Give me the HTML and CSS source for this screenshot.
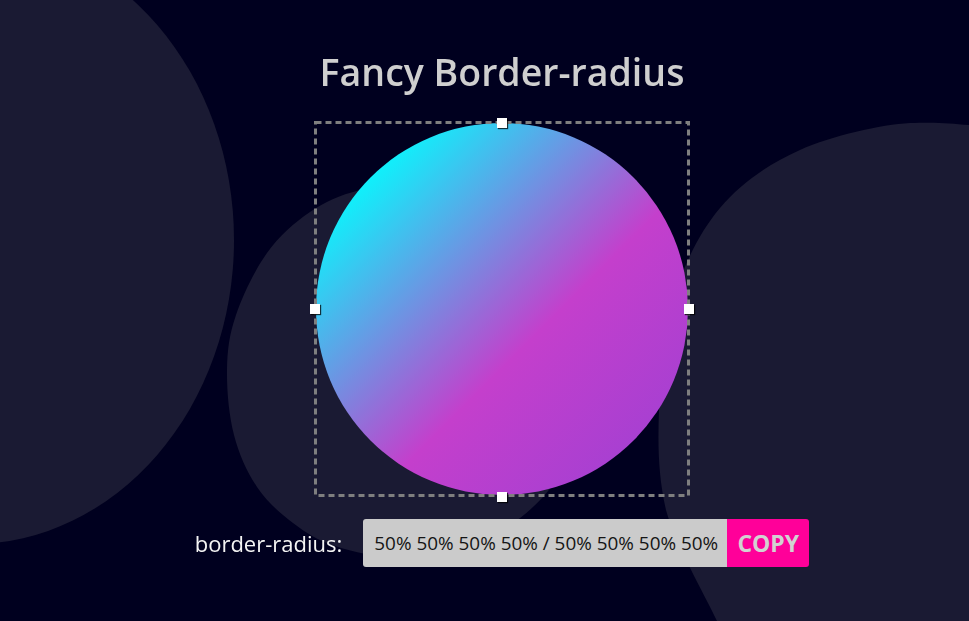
FILE: index.html
```html
<!DOCTYPE html>
<html lang="en">
<head>
<meta charset="utf-8">
<title>Fancy Border-radius</title>
<link rel="stylesheet" href="styles.css">
</head>
<body>
<svg class="bg" width="969" height="621" viewBox="0 0 969 621" aria-hidden="true">
  <ellipse class="blob" cx="-28" cy="240" rx="262" ry="304"/>
  <path class="blob" d="M440,178 C406.7,171.3 381.7,184.3 360,190 C338.3,195.7 325.5,201.5 310,212 C294.5,222.5 279.3,235.8 267,253 C254.7,270.2 242.7,295.5 236,315 C229.3,334.5 227.3,350 227,370 C226.7,390 229,415.5 234,435 C239,454.5 247.2,472.3 257,487 C266.8,501.7 280,513.2 293,523 C306,532.8 317.2,540.2 335,546 C352.8,551.8 377.5,557.7 400,558 C422.5,558.3 446.2,558.2 470,548 C493.8,537.8 523.8,518.3 543,497 C562.2,475.7 576.3,447.8 585,420 C593.7,392.2 599.2,361.7 595,330 C590.8,298.3 585.8,255.3 560,230 C534.2,204.7 473.3,184.7 440,178 Z"/>
  <path class="blob" d="M1000,125 L969,125 C949,123.5 940,122 910,123 C881.8,124.5 831.7,135.8 800,150 C768.3,164.2 741.2,183 720,208 C698.8,233 683.2,266.3 673,300 C662.8,333.7 660.2,375 659,410 C657.8,445 658,474.8 666,510 C675.7,545.2 703.8,592.7 717,621 L730,640 L1000,640 Z"/>
</svg>
<main class="app">
  <h1 class="title">Fancy Border-radius</h1>
  <div class="stage">
    <div class="shape"></div>
    <svg class="frame" width="376" height="376" viewBox="0 0 376 376" aria-hidden="true">
      <rect x="1.5" y="1.5" width="373" height="373" fill="none" stroke="#7f7f7f" stroke-width="3" stroke-dasharray="6 4"/>
    </svg>
    <span class="handle handle-top"></span>
    <span class="handle handle-left"></span>
    <span class="handle handle-right"></span>
    <span class="handle handle-bottom"></span>
  </div>
  <div class="controls">
    <span class="label">border-radius:</span>
    <div class="field">
      <span class="value">50% 50% 50% 50% / 50% 50% 50% 50%</span>
      <button class="copy" type="button">COPY</button>
    </div>
  </div>
</main>
</body>
</html>
```
FILE: styles.css
```css
html, body {
  margin: 0;
  padding: 0;
  height: 100%;
}

body {
  background: #00001f;
  overflow: hidden;
  font-family: "Open Sans", "Noto Sans", sans-serif;
}

.bg {
  position: fixed;
  left: 0;
  top: 0;
  z-index: 0;
  display: block;
}

.blob {
  fill: #1a1a33;
}

.app {
  position: relative;
  z-index: 1;
  display: flex;
  flex-direction: column;
  align-items: center;
  padding: 50px 0 0 35px;
}

.title {
  margin: 0 0 27px;
  font-size: 37.5px;
  line-height: 44px;
  font-weight: 600;
  color: #cfcfcf;
}

.stage {
  position: relative;
  box-sizing: border-box;
  width: 376px;
  height: 376px;
  padding: 2px;
  margin-bottom: 22px;
}

.frame {
  position: absolute;
  left: 0;
  top: 0;
  display: block;
}

.shape {
  width: 100%;
  height: 100%;
  border-radius: 50%;
  background: linear-gradient(135deg, #00ffff 11%, #c43fcc 58%, #9a40d4 100%);
}

.handle {
  position: absolute;
  width: 10px;
  height: 10px;
  background: #ffffff;
  box-shadow: 1px 1px 1px rgba(0, 0, 0, 0.75);
}

.handle-top {
  top: -3px;
  left: 50%;
  margin-left: -5px;
}

.handle-bottom {
  bottom: -5px;
  left: 50%;
  margin-left: -5px;
}

.handle-left {
  left: -4px;
  top: 50%;
  margin-top: -5px;
}

.handle-right {
  right: -4px;
  top: 50%;
  margin-top: -5px;
}

.controls {
  display: flex;
  align-items: center;
  gap: 21px;
  height: 48px;
}

.label {
  font-size: 22px;
  color: #f4f4f4;
  white-space: nowrap;
}

.field {
  display: flex;
  height: 48px;
  border-radius: 3px;
  overflow: hidden;
}

.value {
  box-sizing: border-box;
  width: 364px;
  padding-left: 11px;
  background: #cbcbcb;
  color: #151515;
  font-size: 18.9px;
  line-height: 48px;
  white-space: nowrap;
}

.copy {
  width: 82px;
  height: 48px;
  padding: 0;
  border: none;
  background: #ff0099;
  color: #d2d2d2;
  font-family: "Open Sans", "Noto Sans", sans-serif;
  font-size: 23px;
  font-weight: 700;
}
```
